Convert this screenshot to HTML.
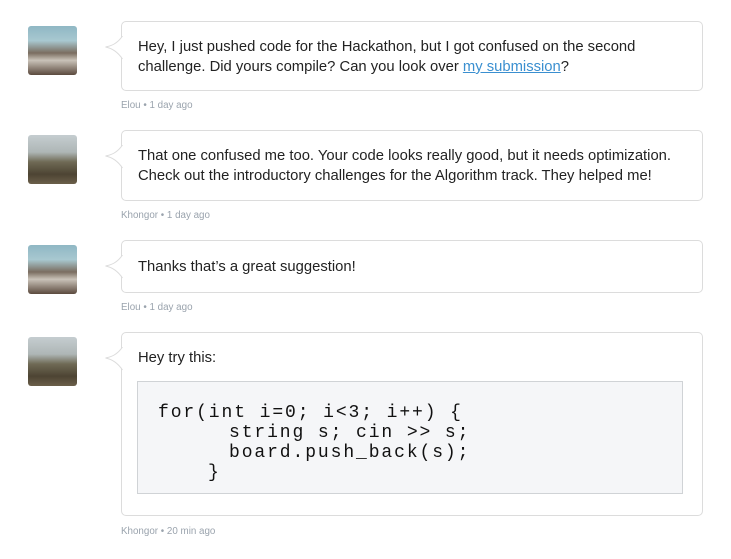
<!DOCTYPE html><html><head><style>
body{margin:0;background:#fff;width:731px;height:559px;position:relative;font-family:"Liberation Sans",sans-serif;overflow:hidden}
.av{position:absolute;left:28px;width:49px;height:49px;border-radius:3px}
.a1{background:linear-gradient(180deg,#8fb7c4 0%,#a8c8d0 30%,#7a6d60 55%,#c9c2b8 70%,#5b4a3e 100%)}
.a2{background:linear-gradient(180deg,#c5cdd0 0%,#aeb6b6 35%,#6f6a55 55%,#4d4433 80%,#6b5f4a 100%)}
.b{position:absolute;left:121px;width:582px;border:1px solid #dcdcdc;border-radius:5px;background:#fff;box-sizing:border-box;padding:15px 16px;font-size:14.8px;line-height:20px;color:#222}
.tail{position:absolute;left:-17px;top:14px}
.m{position:absolute;left:121px;font-size:9.8px;color:#9aa3ad}
a{color:#3a8fd0;text-decoration:underline}
.code{margin-top:13px;margin-left:-1px;width:546px;background:#f5f6f8;border:1px solid #d0d3d6;height:113px;box-sizing:border-box;padding:21px 20px 0;font-family:"Liberation Mono",monospace;font-size:18px;line-height:20px;letter-spacing:1.9px;white-space:pre;color:#111}
.code span{display:inline-block}
</style></head><body>
<div class="av a1" style="top:26px"></div>
<div class="b" style="top:21px;height:70px"><svg class="tail" width="18" height="24"><path d="M17.5 0 C12 8 6 10 0.5 11 C6 12 12 15 17.5 23" fill="#fff" stroke="#dcdcdc"/></svg>Hey, I just pushed code for the Hackathon, but I got confused on the second challenge. Did yours compile? Can you look over <a>my submission</a>?</div>
<div class="m" style="top:100px">Elou • 1 day ago</div>
<div class="av a2" style="top:135px"></div>
<div class="b" style="top:130px;height:71px"><svg class="tail" width="18" height="24"><path d="M17.5 0 C12 8 6 10 0.5 11 C6 12 12 15 17.5 23" fill="#fff" stroke="#dcdcdc"/></svg>That one confused me too. Your code looks really good, but it needs optimization. Check out the introductory challenges for the Algorithm track. They helped me!</div>
<div class="m" style="top:210px">Khongor • 1 day ago</div>
<div class="av a1" style="top:245px"></div>
<div class="b" style="top:240px;height:53px;padding-top:16px"><svg class="tail" width="18" height="24"><path d="M17.5 0 C12 8 6 10 0.5 11 C6 12 12 15 17.5 23" fill="#fff" stroke="#dcdcdc"/></svg>Thanks that’s a great suggestion!</div>
<div class="m" style="top:302px">Elou • 1 day ago</div>
<div class="av a2" style="top:337px"></div>
<div class="b" style="top:332px;height:184px"><svg class="tail" width="18" height="24"><path d="M17.5 0 C12 8 6 10 0.5 11 C6 12 12 15 17.5 23" fill="#fff" stroke="#dcdcdc"/></svg>Hey try this:<div class="code">for(int i=0; i&lt;3; i++) {
<span style="margin-left:71px">string s; cin &gt;&gt; s;</span>
<span style="margin-left:71px">board.push_back(s);</span>
<span style="margin-left:50px">}</span></div></div>
<div class="m" style="top:526px">Khongor • 20 min ago</div>
</body></html>
